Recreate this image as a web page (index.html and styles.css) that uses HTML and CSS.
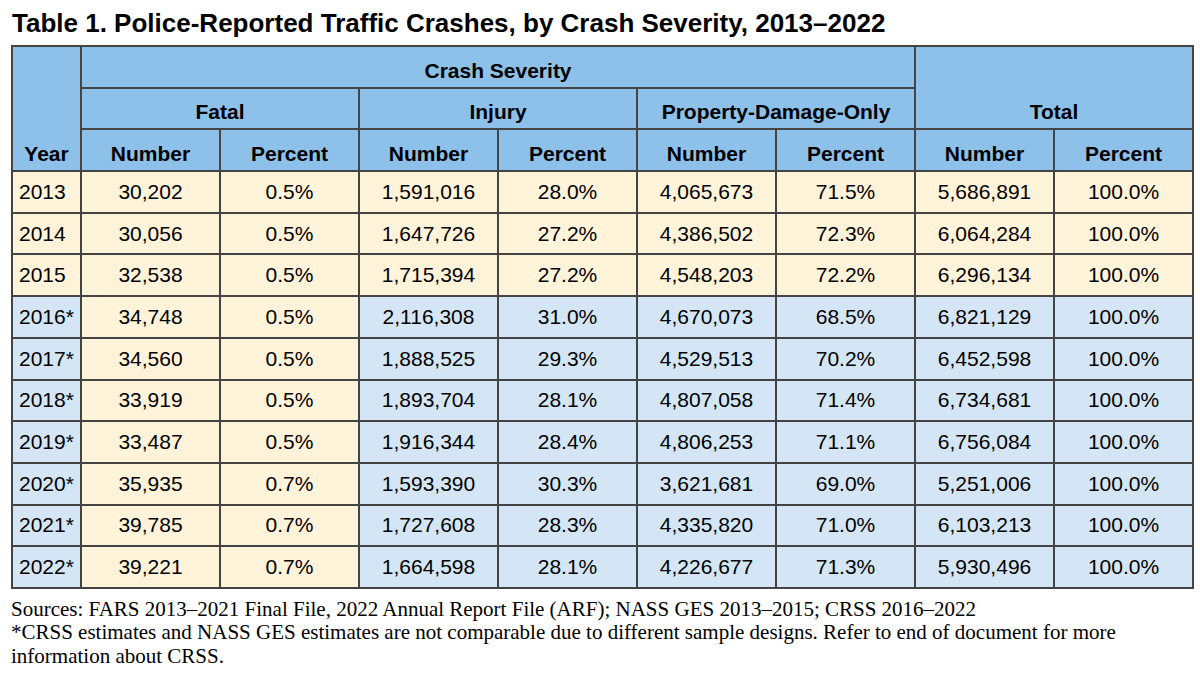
FILE: index.html
```html
<!DOCTYPE html>
<html>
<head>
<meta charset="utf-8">
<link rel="stylesheet" href="styles.css">
</head>
<body>
<div class="page">
  <h1 class="title">Table 1. Police-Reported Traffic Crashes, by Crash Severity, 2013–2022</h1>
  <table class="crash">
    <colgroup>
      <col class="c-year">
      <col class="c-data"><col class="c-data"><col class="c-data"><col class="c-data">
      <col class="c-data"><col class="c-data"><col class="c-data"><col class="c-data">
    </colgroup>
    <thead>
      <tr class="hrow">
        <th rowspan="3" class="h-year">Year</th>
        <th colspan="6">Crash Severity</th>
        <th colspan="2" rowspan="2">Total</th>
      </tr>
      <tr class="hrow">
        <th colspan="2">Fatal</th>
        <th colspan="2">Injury</th>
        <th colspan="2">Property-Damage-Only</th>
      </tr>
      <tr class="hrow">
        <th>Number</th><th>Percent</th>
        <th>Number</th><th>Percent</th>
        <th>Number</th><th>Percent</th>
        <th>Number</th><th>Percent</th>
      </tr>
    </thead>
    <tbody>
      <tr class="ges"><td class="yr">2013</td><td>30,202</td><td>0.5%</td><td>1,591,016</td><td>28.0%</td><td>4,065,673</td><td>71.5%</td><td>5,686,891</td><td>100.0%</td></tr>
      <tr class="ges"><td class="yr">2014</td><td>30,056</td><td>0.5%</td><td>1,647,726</td><td>27.2%</td><td>4,386,502</td><td>72.3%</td><td>6,064,284</td><td>100.0%</td></tr>
      <tr class="ges"><td class="yr">2015</td><td>32,538</td><td>0.5%</td><td>1,715,394</td><td>27.2%</td><td>4,548,203</td><td>72.2%</td><td>6,296,134</td><td>100.0%</td></tr>
      <tr class="crss"><td class="yr">2016*</td><td class="fatal">34,748</td><td class="fatal">0.5%</td><td>2,116,308</td><td>31.0%</td><td>4,670,073</td><td>68.5%</td><td>6,821,129</td><td>100.0%</td></tr>
      <tr class="crss"><td class="yr">2017*</td><td class="fatal">34,560</td><td class="fatal">0.5%</td><td>1,888,525</td><td>29.3%</td><td>4,529,513</td><td>70.2%</td><td>6,452,598</td><td>100.0%</td></tr>
      <tr class="crss"><td class="yr">2018*</td><td class="fatal">33,919</td><td class="fatal">0.5%</td><td>1,893,704</td><td>28.1%</td><td>4,807,058</td><td>71.4%</td><td>6,734,681</td><td>100.0%</td></tr>
      <tr class="crss"><td class="yr">2019*</td><td class="fatal">33,487</td><td class="fatal">0.5%</td><td>1,916,344</td><td>28.4%</td><td>4,806,253</td><td>71.1%</td><td>6,756,084</td><td>100.0%</td></tr>
      <tr class="crss"><td class="yr">2020*</td><td class="fatal">35,935</td><td class="fatal">0.7%</td><td>1,593,390</td><td>30.3%</td><td>3,621,681</td><td>69.0%</td><td>5,251,006</td><td>100.0%</td></tr>
      <tr class="crss"><td class="yr">2021*</td><td class="fatal">39,785</td><td class="fatal">0.7%</td><td>1,727,608</td><td>28.3%</td><td>4,335,820</td><td>71.0%</td><td>6,103,213</td><td>100.0%</td></tr>
      <tr class="crss"><td class="yr">2022*</td><td class="fatal">39,221</td><td class="fatal">0.7%</td><td>1,664,598</td><td>28.1%</td><td>4,226,677</td><td>71.3%</td><td>5,930,496</td><td>100.0%</td></tr>
    </tbody>
  </table>
  <div class="notes">
    <p>Sources: FARS 2013–2021 Final File, 2022 Annual Report File (ARF); NASS GES 2013–2015; CRSS 2016–2022</p>
    <p>*CRSS estimates and NASS GES estimates are not comparable due to different sample designs. Refer to end of document for more information about CRSS.</p>
  </div>
</div>
</body>
</html>
```
FILE: styles.css
```css
html, body {
  margin: 0;
  padding: 0;
  background: #ffffff;
}

.page {
  padding: 8px 0 0 11px;
  width: 1180px;
}

.title {
  margin: 0 0 7px 1px;
  font-family: "Liberation Sans", Arial, sans-serif;
  font-weight: bold;
  font-size: 26px;
  line-height: 30px;
  color: #000;
  white-space: nowrap;
}

.crash {
  border-collapse: collapse;
  table-layout: fixed;
  width: 1180px;
  font-family: "Liberation Sans", Arial, sans-serif;
  font-size: 21px;
  color: #000;
}

.c-year { width: 69px; }
.c-data { width: 139px; }

.crash th,
.crash td {
  border: 2px solid #444;
  padding: 0;
}

.crash th {
  background: #8dc1ea;
  font-weight: bold;
  text-align: center;
  vertical-align: bottom;
  padding-bottom: 4px;
  line-height: 24px;
}

.hrow { height: 41.7px; }

.crash tbody tr { height: 41.7px; }

.crash td {
  text-align: center;
  vertical-align: middle;
  line-height: 24px;
}

.ges td { background: #fff3d9; }
.crss td { background: #d4e6f6; }
.crss td.fatal { background: #fff3d9; }

.crash td.yr {
  text-align: left;
  padding-left: 6px;
}

.notes {
  margin-top: 9px;
  font-family: "Liberation Serif", "Times New Roman", serif;
  font-size: 21px;
  line-height: 23.5px;
  color: #000;
}

.notes p {
  margin: 0;
}
```
